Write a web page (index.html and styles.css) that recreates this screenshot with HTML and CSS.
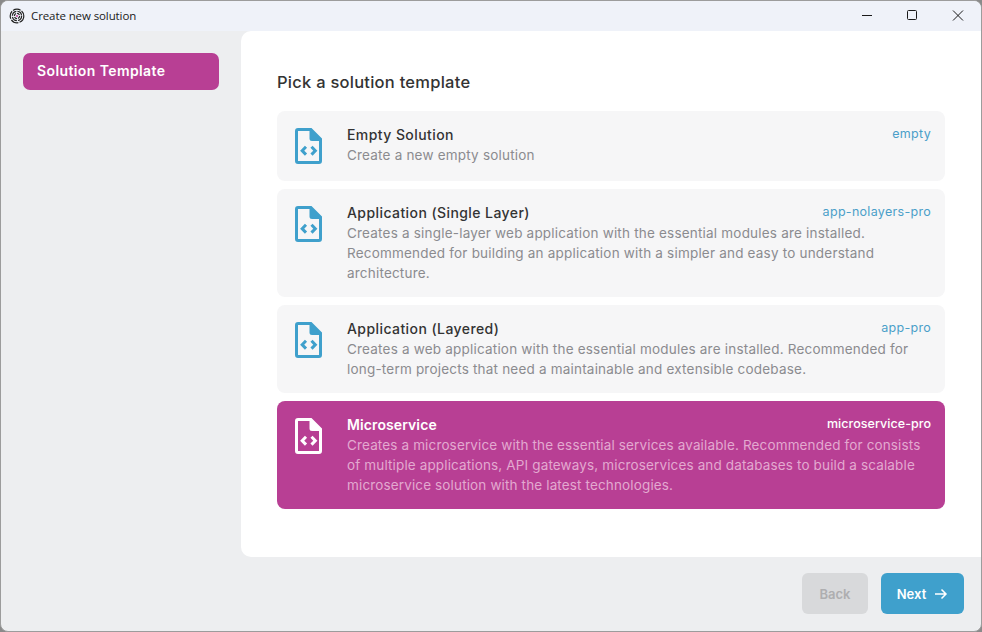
FILE: index.html
```html
<!DOCTYPE html>
<html lang="en">
<head>
	<meta charset="UTF-8">
	<title>Create new solution</title>
	<link rel="stylesheet" href="styles.css">
</head>
<body>
	<div class="window">
		<header class="titlebar">
			<svg class="app-logo" width="16" height="16" viewBox="0 0 16 16" fill="none" stroke="#222" stroke-width="1.2">
				<circle cx="8" cy="8" r="6.8" stroke-dasharray="8 1.2"/>
				<circle cx="8" cy="8" r="4.6" stroke-dasharray="6 1.2"/>
				<circle cx="8" cy="8" r="2.6" stroke-dasharray="3 1"/>
				<circle cx="8" cy="8" r="1" fill="#b83f94" stroke="none"/>
			</svg>
			<span class="app-title">Create new solution</span>
			<div class="window-controls">
				<svg width="46" height="30" viewBox="0 0 46 30" fill="none" stroke="#1a1a1a"><path d="M19 14.500h10"/></svg>
				<svg width="46" height="30" viewBox="0 0 46 30" fill="none" stroke="#1a1a1a"><rect x="18.500" y="9.500" width="9" height="9" rx="1"/></svg>
				<svg width="46" height="30" viewBox="0 0 46 30" fill="none" stroke="#1a1a1a"><path d="M18 9.500l10 10M28 9.500l-10 10"/></svg>
			</div>
		</header>

		<div class="main">
			<aside class="sidebar">
				<div class="step">Solution Template</div>
			</aside>
			<section class="content">
				<h1>Pick a solution template</h1>
				<div class="templates">
					<div class="template">
						<svg class="file-icon" width="27" height="36" viewBox="0 0 27 36"><path fill-rule="evenodd" d="M3 0h13.500L27 10.500V33a3 3 0 0 1-3 3H3a3 3 0 0 1-3-3V3a3 3 0 0 1 3-3zm0 3v30h21V13h-7a2.500 2.500 0 0 1-2.500-2.500V3z"/><path class="code" d="M11 18.800l-3.800 3.900 3.800 3.900M16.500 18.800l3.800 3.900-3.800 3.900"/></svg>
						<div class="template-text">
							<div class="template-head"><span class="name">Empty Solution</span><span class="tag">empty</span></div>
							<p>Create a new empty solution</p>
						</div>
					</div>
					<div class="template">
						<svg class="file-icon" width="27" height="36" viewBox="0 0 27 36"><path fill-rule="evenodd" d="M3 0h13.500L27 10.500V33a3 3 0 0 1-3 3H3a3 3 0 0 1-3-3V3a3 3 0 0 1 3-3zm0 3v30h21V13h-7a2.500 2.500 0 0 1-2.500-2.500V3z"/><path class="code" d="M11 18.800l-3.800 3.900 3.800 3.900M16.500 18.800l3.800 3.900-3.800 3.900"/></svg>
						<div class="template-text">
							<div class="template-head"><span class="name">Application (Single Layer)</span><span class="tag">app-nolayers-pro</span></div>
							<p>Creates a single-layer web application with the essential modules are installed.<br>Recommended for building an application with a simpler and easy to understand<br>architecture.</p>
						</div>
					</div>
					<div class="template">
						<svg class="file-icon" width="27" height="36" viewBox="0 0 27 36"><path fill-rule="evenodd" d="M3 0h13.500L27 10.500V33a3 3 0 0 1-3 3H3a3 3 0 0 1-3-3V3a3 3 0 0 1 3-3zm0 3v30h21V13h-7a2.500 2.500 0 0 1-2.500-2.500V3z"/><path class="code" d="M11 18.800l-3.800 3.900 3.800 3.900M16.500 18.800l3.800 3.900-3.800 3.900"/></svg>
						<div class="template-text">
							<div class="template-head"><span class="name">Application (Layered)</span><span class="tag">app-pro</span></div>
							<p>Creates a web application with the essential modules are installed. Recommended for<br>long-term projects that need a maintainable and extensible codebase.</p>
						</div>
					</div>
					<div class="template selected">
						<svg class="file-icon" width="27" height="36" viewBox="0 0 27 36"><path fill-rule="evenodd" d="M3 0h13.500L27 10.500V33a3 3 0 0 1-3 3H3a3 3 0 0 1-3-3V3a3 3 0 0 1 3-3zm0 3v30h21V13h-7a2.500 2.500 0 0 1-2.500-2.500V3z"/><path class="code" d="M11 18.800l-3.800 3.900 3.800 3.900M16.500 18.800l3.800 3.900-3.800 3.900"/></svg>
						<div class="template-text">
							<div class="template-head"><span class="name">Microservice</span><span class="tag">microservice-pro</span></div>
							<p>Creates a microservice with the essential services available. Recommended for consists<br>of multiple applications, API gateways, microservices and databases to build a scalable<br>microservice solution with the latest technologies.</p>
						</div>
					</div>
				</div>
			</section>
		</div>

		<footer class="footer">
			<button class="btn btn-back">Back</button>
			<button class="btn btn-next">Next
				<svg width="14" height="12" viewBox="0 0 14 12" fill="none" stroke="#fff" stroke-width="1.500"><path d="M1 6h11M7.500 1.500L12 6l-4.500 4.500"/></svg>
			</button>
		</footer>
	</div>
</body>
</html>
```

FILE: styles.css
```css
* {
	box-sizing: border-box;
}

html, body {
	margin: 0;
	padding: 0;
	height: 100%;
	background: #8a8a8a;
}

body {
	font-family: "Inter", "Liberation Sans", sans-serif;
}

.window {
	width: 982px;
	height: 632px;
	display: flex;
	flex-direction: column;
	background: #edeef0;
	border: 1px solid #9c9c9c;
	border-radius: 8px;
	overflow: hidden;
}

.titlebar {
	height: 30px;
	display: flex;
	align-items: center;
	padding-left: 8px;
	background: #eff2f9;
	flex: none;
}

.app-logo {
	margin-right: 6px;
}

.app-title {
	font: 11.500px "Open Sans", sans-serif;
	letter-spacing: -0.1px;
	color: #1b1b1b;
	margin-top: -1px;
}

.window-controls {
	margin-left: auto;
	display: flex;
}

.main {
	flex: 1;
	display: flex;
	min-height: 0;
}

.sidebar {
	width: 240px;
	padding: 22px 22px 0;
	flex: none;
}

.step {
	height: 37px;
	line-height: 36px;
	padding-left: 14px;
	background: #b83f94;
	border-radius: 7px;
	color: #fff;
	font-size: 14px;
	font-weight: 600;
	letter-spacing: 0.4px;
}

.content {
	flex: 1;
	background: #fff;
	border-radius: 10px 0 0 10px;
	padding: 39px 36px 0;
}

h1 {
	margin: 0 0 17px;
	font-size: 16.500px;
	line-height: 24px;
	font-weight: 450;
	letter-spacing: 0.25px;
	color: #333;
}

.templates {
	display: flex;
	flex-direction: column;
	gap: 8px;
}

.template {
	display: flex;
	min-height: 70px;
	padding: 14px 14px 14px 18px;
	background: #f6f6f7;
	border-radius: 8px;
	color: #8b8b8f;
}

.file-icon {
	flex: none;
	margin: 3px 25px 0 0;
	fill: #3fa0cc;
}

.file-icon .code {
	fill: none;
	stroke: #3fa0cc;
	stroke-width: 3;
}

.template-text {
	flex: 1;
}

.template-head {
	display: flex;
	justify-content: space-between;
	align-items: center;
	height: 20px;
	margin: -1px 0 1px;
}

.name {
	font-size: 14px;
	font-weight: 500;
	letter-spacing: 0.42px;
	color: #333;
}

.tag {
	font-size: 12.500px;
	letter-spacing: 0.3px;
	margin-top: -2px;
	color: #4b9fc9;
}

.template p {
	margin: 0;
	font-size: 13.500px;
	letter-spacing: 0.2px;
	line-height: 20px;
}

.selected {
	background: #b83f94;
	color: #e3a9d0;
}

.template.selected p {
	letter-spacing: 0.14px;
}

.selected .name {
	color: #fff;
	font-weight: 600;
	letter-spacing: 0.1px;
}

.selected .tag {
	color: #fff;
	font-weight: 500;
	letter-spacing: 0.05px;
}

.selected .file-icon {
	fill: #fff;
}

.selected .file-icon .code {
	stroke: #fff;
}

.footer {
	height: 74px;
	flex: none;
	display: flex;
	justify-content: flex-end;
	gap: 13px;
	padding: 16px 17px 0 0;
}

.btn {
	height: 41px;
	border: 0;
	border-radius: 6px;
	font-family: inherit;
	font-size: 13px;
	font-weight: 600;
}

.btn-back {
	width: 66px;
	background: #d8d9db;
	color: #aeaeb0;
}

.btn-next {
	width: 83px;
	background: #3fa0cc;
	color: #fff;
	display: flex;
	align-items: center;
	justify-content: center;
	gap: 8px;
}
```
